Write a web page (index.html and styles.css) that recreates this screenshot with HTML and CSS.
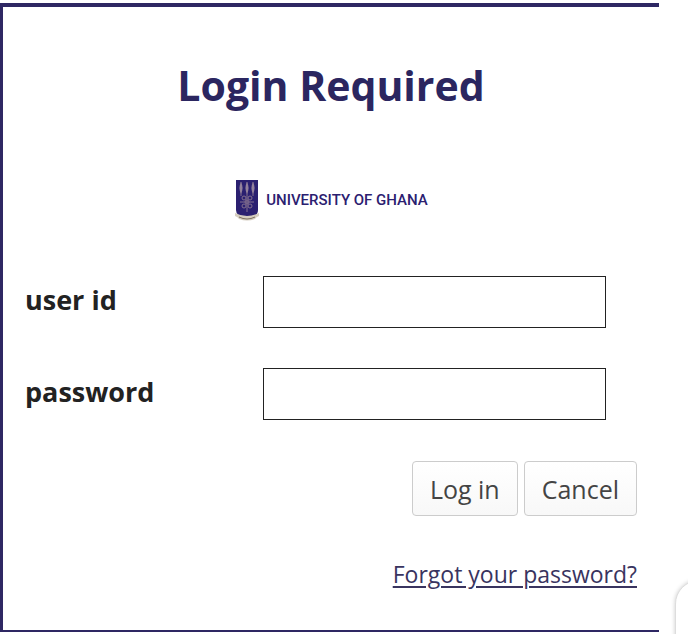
FILE: index.html
```html
<!DOCTYPE html>
<html lang="en">
<head>
<meta charset="utf-8">
<meta name="viewport" content="width=device-width, initial-scale=1">
<title>Login Required</title>
<link rel="stylesheet" href="styles.css">
</head>
<body>
<main class="panel">
  <h1 class="title">Login Required</h1>
  <div class="brand">
    <svg class="crest" viewBox="0 0 26 42" aria-hidden="true">
      <path d="M2 1H24V31Q24 38 13 40Q2 38 2 31Z" fill="#2b2070"/>
      <g fill="#a393a8">
        <path d="M7 3Q10 9 7 15Q4 9 7 3ZM13 3Q16 9 13 15Q10 9 13 3ZM19 3Q22 9 19 15Q16 9 19 3Z"/>
      </g>
      <g fill="none" stroke="#84708f" stroke-width="1">
        <path d="M7 3V17M13 3V33M19 3V17M6 23H20"/>
        <circle cx="13" cy="23" r="2"/>
        <circle cx="10" cy="19" r="2"/>
        <circle cx="16" cy="19" r="2"/>
        <circle cx="10" cy="27" r="2"/>
        <circle cx="16" cy="27" r="2"/>
      </g>
      <path d="M1 34Q13 40 25 34L25 37Q22 38 21 40Q13 43 5 40Q4 38 1 37Z" fill="#d5cdbf"/>
      <path d="M5 38Q13 42 21 38" fill="none" stroke="#7d705f" stroke-width="1"/>
    </svg>
    <span class="brand-name">UNIVERSITY OF GHANA</span>
  </div>
  <form class="form">
    <div class="field">
      <label class="label" for="userid">user id</label>
      <input class="input" id="userid" type="text">
    </div>
    <div class="field">
      <label class="label" for="password">password</label>
      <input class="input" id="password" type="password">
    </div>
    <div class="actions">
      <button class="button" type="submit">Log in</button>
      <button class="button" type="button">Cancel</button>
    </div>
    <a class="forgot" href="#">Forgot your password?</a>
  </form>
</main>
<button class="bubble" type="button" aria-label="Help"></button>
</body>
</html>
```
FILE: styles.css
```css
* {
  box-sizing: border-box;
}

body {
  margin: 0;
  padding: 3px 29px 0 0;
  overflow: hidden;
  background: #fff;
  color: #222;
  font-family: "Open Sans", sans-serif;
}

.panel {
  padding: 48px 22px 40px;
  border: solid #2e2763;
  border-width: 4px 0 2px 3px;
}

.title {
  margin: 0;
  color: #2b2660;
  font-size: 41px;
  font-weight: 700;
  line-height: 60px;
  text-align: center;
}

.brand {
  display: flex;
  align-items: center;
  justify-content: center;
  gap: 6px;
  margin-top: 64px;
}

.crest {
  width: 26px;
  height: 42px;
}

.brand-name {
  color: #2b2070;
  font-family: Roboto, sans-serif;
  font-size: 15px;
  font-weight: 500;
  line-height: 24px;
}

.form {
  display: flex;
  flex-direction: column;
  margin-top: 55px;
}

.field {
  display: grid;
  grid-template-columns: 238px 1fr;
  align-items: start;
  margin-bottom: 40px;
  padding-right: 31px;
}

.label {
  padding-top: 5px;
  font-size: 27px;
  font-weight: 700;
  line-height: 38px;
}

.input {
  width: 100%;
  height: 52px;
  padding: 0 12px;
  border: 1px solid #222;
  border-radius: 0;
  background: #fff;
  font: inherit;
  font-size: 24px;
}

.actions {
  display: flex;
  justify-content: flex-end;
  gap: 6px;
  margin-top: 1px;
}

.button {
  height: 55px;
  padding: 0 17px;
  border: 1px solid #ccc;
  border-radius: 4px;
  background: linear-gradient(#fff, #f8f8f8);
  color: #444;
  font-family: inherit;
  font-size: 25px;
}

.forgot {
  align-self: flex-end;
  margin-top: 42px;
  color: #39345f;
  font-size: 23px;
  line-height: 32px;
  text-underline-offset: 3px;
}

.bubble {
  position: fixed;
  right: -36px;
  bottom: -26px;
  width: 49px;
  height: 80px;
  border: 1px solid #ddd;
  border-radius: 24px;
  background: #fff;
  box-shadow: 0 0 4px #ccc;
}
```
